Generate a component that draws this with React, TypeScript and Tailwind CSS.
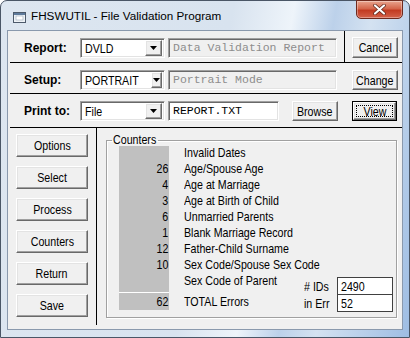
import React from "react";

const SANS = { fontFamily: '"Liberation Sans", Arial, sans-serif' } as const;
const MONO = { fontFamily: '"Liberation Mono", "Courier New", monospace' } as const;

const raised =
  "border border-t-white border-l-white border-r-[#696969] border-b-[#696969] shadow-[inset_-1px_-1px_0_#a0a0a0,inset_1px_1px_0_#e3e3e3] bg-[#f0f0f0]";
const sunken =
  "border border-t-[#a0a0a0] border-l-[#a0a0a0] border-r-white border-b-white shadow-[inset_1px_1px_0_#696969,inset_-1px_-1px_0_#e3e3e3]";

function NL({ children }: { children: React.ReactNode }) {
  return <span className="inline-block whitespace-nowrap scale-x-[0.82] origin-left">{children}</span>;
}
function NR({ children }: { children: React.ReactNode }) {
  return <span className="inline-block whitespace-nowrap scale-x-[0.82] origin-right">{children}</span>;
}
function NC({ children }: { children: React.ReactNode }) {
  return <span className="inline-block whitespace-nowrap scale-x-[0.82] origin-center">{children}</span>;
}

function Btn({ label, w, h = 20, def = false }: { label: string; w: number; h?: number; def?: boolean }) {
  if (def) {
    return (
      <div className="border border-black" style={{ width: w, height: h }}>
        <div className={`${raised} w-full h-full flex items-center justify-center p-[2px]`}>
          <div className="w-full h-full border border-dotted border-black flex items-center justify-center text-[13px] leading-none text-black" style={SANS}>
            <NC>{label}</NC>
          </div>
        </div>
      </div>
    );
  }
  return (
    <div
      className={`${raised} flex items-center justify-center text-[13px] leading-none text-black`}
      style={{ ...SANS, width: w, height: h }}
    >
      <NC>{label}</NC>
    </div>
  );
}

function Combo({ value }: { value: string }) {
  return (
    <div className={`${sunken} bg-white w-[85px] h-[20px] flex items-center pl-[4px] pr-[2px]`}>
      <span className="flex-1 text-[13px] leading-none text-black" style={SANS}><NL>{value}</NL></span>
      <div className={`${raised} w-[17px] h-[16px] flex items-center justify-center`}>
        <svg width="7" height="4" viewBox="0 0 7 4"><path d="M0 0h7L3.5 4z" fill="#000" /></svg>
      </div>
    </div>
  );
}

function TextBox({ value, w, disabled = false }: { value: string; w: number; disabled?: boolean }) {
  return (
    <div
      className={`${sunken} ${disabled ? "bg-[#f0f0f0] text-[#8d8d8d]" : "bg-white text-black"} h-[20px] flex items-center pl-[4px] text-[11.5px] leading-none`}
      style={{ ...MONO, width: w }}
    >
      {value}
    </div>
  );
}

function Label({ text }: { text: string }) {
  return (
    <div className="w-[56px] h-[20px] flex items-center font-bold text-[12px] leading-none text-black" style={SANS}>
      {text}
    </div>
  );
}

const rows: [string, string][] = [
  ["", "Invalid Dates"],
  ["26", "Age/Spouse Age"],
  ["4", "Age at Marriage"],
  ["3", "Age at Birth of Child"],
  ["6", "Unmarried Parents"],
  ["1", "Blank Marriage Record"],
  ["12", "Father-Child Surname"],
  ["10", "Sex Code/Spouse Sex Code"],
  ["", "Sex Code of Parent"],
];

export default function App() {
  return (
    <div className="w-[410px] h-[338px] overflow-hidden bg-white">
      <div className="w-[410px] h-[338px] rounded-t-[7px] border border-[#4a5666] bg-[linear-gradient(100deg,#dde6f0_0%,#d8e3ef_50%,#eef4fa_63%,#bcd1ea_72%,#d4e2f1_80%,#9ebde3_100%)] flex flex-col">
        <div className="h-[29px] flex items-start">
          <div className="mt-[9px] ml-[11px] w-[16px] h-[14px]">
            <svg width="16" height="14" viewBox="0 0 16 14">
              <rect x="1.5" y="2.5" width="12" height="10" fill="#eef2f6" stroke="#4d5a6b" />
              <rect x="2" y="3" width="11" height="2" fill="#5f7b9c" />
              <rect x="4" y="6" width="7" height="4" fill="#fff" stroke="#9aa8b8" strokeWidth="0.6" />
            </svg>
          </div>
          <div className="ml-[3px] mt-[7px] text-[11.7px] text-black leading-[16px]" style={SANS}>
            FHSWUTIL - File Validation Program
          </div>
          <div className="ml-auto mr-[6px] -mt-px w-[47px] h-[19px] rounded-b-[5px] border border-[#6e2a1e] bg-[linear-gradient(180deg,#e9a58f_0%,#d4664b_45%,#c23b22_55%,#d4624a_100%)] flex items-center justify-center shadow-[inset_0_0_0_1px_rgba(255,255,255,0.35)]">
            <svg width="13" height="11" viewBox="0 0 13 11">
              <path d="M2 1.5L11 9.5M11 1.5L2 9.5" stroke="#5a2318" strokeWidth="3.6" strokeLinecap="round" />
              <path d="M2 1.5L11 9.5M11 1.5L2 9.5" stroke="#fff" strokeWidth="2.2" strokeLinecap="round" />
            </svg>
          </div>
        </div>
        <div className="flex-1 flex px-[6px] pb-[7px]">
          <div className="flex-1 bg-[#f0f0f0] border border-[#8a99ad] flex flex-col" style={SANS}>
            {/* Row 1 */}
            <div className="h-[31px] flex items-stretch">
              <div className="flex items-start pt-[7px] pl-[16px]">
                <Label text="Report:" />
                <Combo value="DVLD" />
                <div className="ml-[3px]"><TextBox value="Data Validation Report" w={169} disabled /></div>
              </div>
              <div className="ml-[7px] w-px bg-black" />
              <div className="ml-[7px] pt-[6px]"><Btn label="Cancel" w={46} h={21} /></div>
            </div>
            <div className="h-px bg-black ml-[2px]" />
            {/* Row 2 */}
            <div className="h-[30px] flex items-start pt-[7px] pl-[16px]">
              <Label text="Setup:" />
              <Combo value="PORTRAIT" />
              <div className="ml-[3px]"><TextBox value="Portrait Mode" w={169} disabled /></div>
              <div className="ml-[15px]"><Btn label="Change" w={46} h={20} /></div>
            </div>
            <div className="h-px bg-black ml-[2px]" />
            {/* Row 3 */}
            <div className="h-[33px] flex items-start pt-[7px] pl-[16px]">
              <Label text="Print to:" />
              <Combo value="File" />
              <div className="ml-[3px]"><TextBox value="REPORT.TXT" w={111} /></div>
              <div className="ml-[13px]"><Btn label="Browse" w={46} h={20} /></div>
              <div className="ml-[14px]"><Btn label="View" w={45} h={20} def /></div>
            </div>
            <div className="h-px bg-black ml-[2px]" />
            {/* Bottom */}
            <div className="flex-1 flex">
              <div className="w-[88px] pl-[8px] pt-[6px] flex flex-col gap-[9px]">
                {["Options", "Select", "Process", "Counters", "Return", "Save"].map((b) => (
                  <Btn key={b} label={b} w={72} h={23} />
                ))}
              </div>
              <div className="w-px h-[197px] bg-black" />
              <div className="pl-[9px] pt-[5px]">
                <fieldset className="w-[291px] h-[185px] border border-[#a0a0a0] shadow-[1px_1px_0_#fff,inset_1px_1px_0_#fff] m-0 p-0">
                  <legend className="ml-[5px] px-[1px] w-[46px] text-[13px] leading-[14px] text-black"><NL>Counters</NL></legend>
                  <div className="flex pl-[12px] h-[171px] -mt-px">
                    <div className="w-[185px] flex flex-col">
                      {rows.map(([n, l], i) => (
                        <div key={i} className="flex h-[16px] items-start">
                          <div className="w-[50px] h-full bg-[#c0c0c0] text-right pr-[1px] text-[13px] leading-[14px] text-black"><NR>{n}</NR></div>
                          <div className="ml-[15px] w-[120px] text-[13px] leading-[14px] text-black"><NL>{l}</NL></div>
                        </div>
                      ))}
                      <div className="flex h-[5px]">
                        <div className="w-[50px] h-full bg-[#c0c0c0] pt-[2px]"><div className="h-px bg-white" /></div>
                      </div>
                      <div className="flex h-[15px] items-start">
                        <div className="w-[50px] h-full bg-[#c0c0c0] text-right pr-[1px] text-[13px] leading-[14px] text-black"><NR>62</NR></div>
                        <div className="ml-[15px] w-[120px] text-[13px] leading-[14px] text-black"><NL>TOTAL Errors</NL></div>
                      </div>
                    </div>
                    <div className="w-[89px] flex flex-col justify-end pb-[5px]">
                      <div className="flex items-center">
                        <span className="text-[13px] leading-none text-black w-[33px]"><NL>#&nbsp;IDs</NL></span>
                        <div className="w-[56px] h-[18px] border border-[#404040] bg-white text-[13px] leading-none flex items-center pl-[3px] text-black"><NL>2490</NL></div>
                      </div>
                      <div className="flex items-center -mt-px">
                        <span className="text-[13px] leading-none text-black w-[33px]"><NL>in Err</NL></span>
                        <div className="w-[56px] h-[18px] border border-[#404040] bg-white text-[13px] leading-none flex items-center pl-[3px] text-black"><NL>52</NL></div>
                      </div>
                    </div>
                  </div>
                </fieldset>
              </div>
            </div>
          </div>
        </div>
      </div>
    </div>
  );
}
